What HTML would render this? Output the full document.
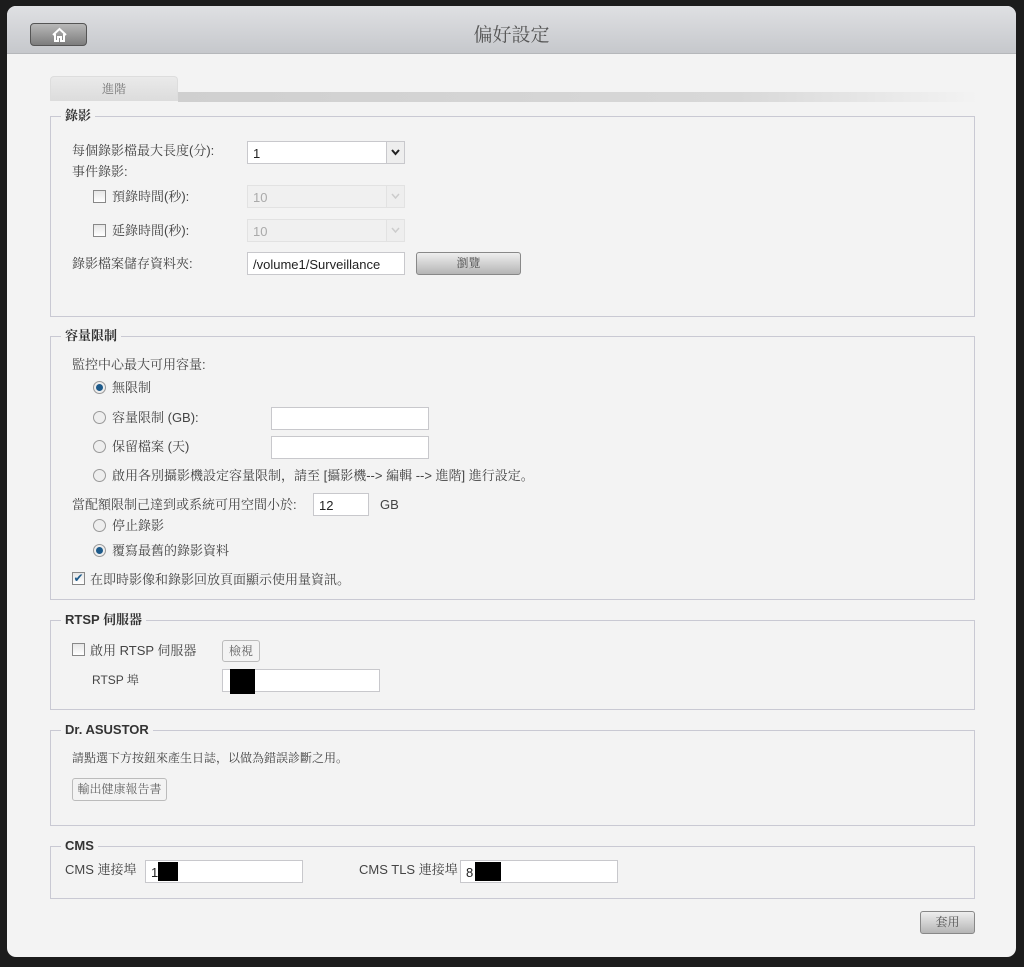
<!DOCTYPE html>
<html><head><meta charset="utf-8"><style>
*{box-sizing:border-box;margin:0;padding:0}
body{width:1024px;height:967px;background:#1c1c1c;position:relative;overflow:hidden;font-family:"Liberation Sans","Noto Serif CJK SC",serif;font-size:13px;color:#444}
.a{position:absolute}
#panel{left:7px;top:6px;width:1009px;height:951px;background:#f3f3f3;border-radius:9px;overflow:hidden}
#hdr{left:0;top:0;width:1009px;height:48px;background:linear-gradient(#dfe0e3,#c6c8cc);border-bottom:1px solid #b5b7ba}
#title{left:0;top:14px;width:1009px;text-align:center;font-size:19px;color:#555}
#home{left:23px;top:17px;width:57px;height:23px;border:1px solid #555;border-radius:4px;background:linear-gradient(#b8b8b8,#7d7d7d)}
.fs{position:absolute;border:1px solid #c9c9d3;left:50px;width:925px}
.lg{position:absolute;top:-9px;left:10px;background:#f3f3f3;padding:0 4px;font-weight:bold;color:#333;font-size:13px;line-height:16px}
.inp{position:absolute;background:#fff;border:1px solid #c8c8cc;height:23px;font-size:13px;color:#222;padding:4px 5px;font-family:"Liberation Sans",sans-serif}
.dis{background:#f0f0f0;color:#aaa;border-color:#e2e2e2}
.cb{position:absolute;width:13px;height:13px;border:1px solid #888;background:linear-gradient(#e6e6e6,#fff)}
.rd{position:absolute;width:13px;height:13px;border-radius:50%;border:1px solid #999;background:#eee}
.rd.on::after{content:"";position:absolute;left:2px;top:2px;width:7px;height:7px;border-radius:50%;background:#1d5a8a}
.btn{position:absolute;border:1px solid #bbb;border-radius:3px;background:#f3f3f3;color:#666;font-size:12px;text-align:center}
.gbtn{position:absolute;border:1px solid #888;border-radius:3px;background:linear-gradient(#eee,#b5b5b5);color:#555;font-size:12px;text-align:center}
.blk{position:absolute;background:#000}
.t{position:absolute;line-height:15px}
.arr{position:absolute;width:19px;height:23px;border:1px solid #c8c8cc;background:#eee}
</style></head><body>
<div id="panel" class="a">
<div id="hdr" class="a"></div>
<div id="title" class="a">偏好設定</div>
<div id="home" class="a"><svg width="57" height="23" viewBox="0 0 57 23"><path d="M22 11 L28.5 5 L35 11 M24 10 V17 H27 V13 H30 V17 H33 V10" fill="none" stroke="#fff" stroke-width="2"/></svg></div>
<div class="a" style="left:43px;top:70px;width:128px;height:25px;background:linear-gradient(#eaeaea,#dcdcdc);border-radius:4px 4px 0 0;border:1px solid #ddd;border-bottom:none;text-align:center;line-height:25px;color:#777;font-size:12px">進階</div>
<div class="a" style="left:171px;top:86px;width:800px;height:10px;background:linear-gradient(90deg,#cfcfcf,#d8d8d8 70%,#f3f3f3)"></div>
</div>

<div class="fs" style="top:116px;height:201px"><div class="lg">錄影</div></div>
<div class="t" style="left:72px;top:143px">每個錄影檔最大長度(分):</div>
<div class="inp" style="left:247px;top:141px;width:158px">1</div>
<div class="arr" style="left:386px;top:141px"><svg width="17" height="21"><path d="M5 8 L8.5 12 L12 8" fill="none" stroke="#222" stroke-width="2"/></svg></div>
<div class="t" style="left:72px;top:164px">事件錄影:</div>
<div class="cb" style="left:93px;top:190px"></div><div class="t" style="left:112px;top:189px">預錄時間(秒):</div>
<div class="inp dis" style="left:247px;top:185px;width:158px">10</div>
<div class="arr" style="left:386px;top:185px;border-color:#e2e2e2;background:#eee"><svg width="17" height="21"><path d="M5 8 L8.5 12 L12 8" fill="none" stroke="#ccc" stroke-width="1.5"/></svg></div>
<div class="cb" style="left:93px;top:224px"></div><div class="t" style="left:112px;top:223px">延錄時間(秒):</div>
<div class="inp dis" style="left:247px;top:219px;width:158px">10</div>
<div class="arr" style="left:386px;top:219px;border-color:#e2e2e2;background:#eee"><svg width="17" height="21"><path d="M5 8 L8.5 12 L12 8" fill="none" stroke="#ccc" stroke-width="1.5"/></svg></div>
<div class="t" style="left:72px;top:256px">錄影檔案儲存資料夾:</div>
<div class="inp" style="left:247px;top:252px;width:158px">/volume1/Surveillance</div>
<div class="gbtn" style="left:416px;top:252px;width:105px;height:23px;line-height:21px">瀏覽</div>

<div class="fs" style="top:336px;height:264px"><div class="lg">容量限制</div></div>
<div class="t" style="left:72px;top:357px">監控中心最大可用容量:</div>
<div class="rd on" style="left:93px;top:381px"></div><div class="t" style="left:112px;top:380px">無限制</div>
<div class="rd" style="left:93px;top:411px"></div><div class="t" style="left:112px;top:410px">容量限制 (GB):</div>
<div class="inp" style="left:271px;top:407px;width:158px"></div>
<div class="rd" style="left:93px;top:440px"></div><div class="t" style="left:112px;top:439px">保留檔案 (天)</div>
<div class="inp" style="left:271px;top:436px;width:158px"></div>
<div class="rd" style="left:93px;top:469px"></div><div class="t" style="left:112px;top:468px">啟用各別攝影機設定容量限制，請至 [攝影機--&gt; 編輯 --&gt; 進階] 進行設定。</div>
<div class="t" style="left:72px;top:497px">當配額限制己達到或系統可用空間小於:</div>
<div class="inp" style="left:313px;top:493px;width:56px">12</div>
<div class="t" style="left:380px;top:497px">GB</div>
<div class="rd" style="left:93px;top:519px"></div><div class="t" style="left:112px;top:518px">停止錄影</div>
<div class="rd on" style="left:93px;top:544px"></div><div class="t" style="left:112px;top:543px">覆寫最舊的錄影資料</div>
<div class="cb" style="left:72px;top:572px;font-size:12px;line-height:11px;color:#1d5a8a;text-align:center">✔</div><div class="t" style="left:90px;top:572px">在即時影像和錄影回放頁面顯示使用量資訊。</div>

<div class="fs" style="top:620px;height:90px"><div class="lg">RTSP 伺服器</div></div>
<div class="cb" style="left:72px;top:643px"></div><div class="t" style="left:90px;top:643px">啟用 RTSP 伺服器</div>
<div class="btn" style="left:222px;top:640px;width:38px;height:22px;line-height:20px">檢視</div>
<div class="t" style="left:92px;top:673px;font-size:12px">RTSP 埠</div>
<div class="inp" style="left:222px;top:669px;width:158px"></div><div class="blk" style="left:230px;top:669px;width:25px;height:25px"></div>

<div class="fs" style="top:730px;height:96px"><div class="lg">Dr. ASUSTOR</div></div>
<div class="t" style="left:72px;top:751px;font-size:12px">請點選下方按鈕來產生日誌，以做為錯誤診斷之用。</div>
<div class="btn" style="left:72px;top:778px;width:95px;height:23px;line-height:21px">輸出健康報告書</div>

<div class="fs" style="top:846px;height:53px"><div class="lg">CMS</div></div>
<div class="t" style="left:65px;top:862px">CMS 連接埠</div>
<div class="inp" style="left:145px;top:860px;width:158px">1</div><div class="blk" style="left:158px;top:862px;width:20px;height:19px"></div>
<div class="t" style="left:359px;top:862px">CMS TLS 連接埠</div>
<div class="inp" style="left:460px;top:860px;width:158px">8</div><div class="blk" style="left:475px;top:862px;width:26px;height:19px"></div>

<div class="gbtn" style="left:920px;top:911px;width:55px;height:23px;line-height:21px">套用</div>
</body></html>
